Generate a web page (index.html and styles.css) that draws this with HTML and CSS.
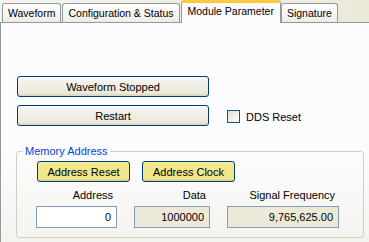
FILE: index.html
```html
<!DOCTYPE html>
<html lang="en">
<head>
  <meta charset="UTF-8">
  <title>Module Parameter</title>
  <link rel="stylesheet" href="styles.css">
</head>
<body>
  <div class="tabs">
    <div class="tab">Waveform</div>
    <div class="tab">Configuration &amp; Status</div>
    <div class="tab active">Module Parameter</div>
    <div class="tab">Signature</div>
  </div>

  <div class="page">
    <div class="actions">
      <button class="btn wide">Waveform Stopped</button>
      <div class="row">
        <button class="btn wide">Restart</button>
        <label class="check"><span class="box"></span>DDS Reset</label>
      </div>
    </div>

    <fieldset class="group">
      <legend>Memory Address</legend>
      <div class="group-buttons">
        <button class="btn yellow">Address Reset</button>
        <button class="btn yellow">Address Clock</button>
      </div>
      <div class="fields">
        <span class="field-label">Address</span>
        <span class="field-label">Data</span>
        <span class="field-label">Signal Frequency</span>
        <input class="field" type="text" value="0">
        <input class="field readonly" type="text" value="1000000" readonly>
        <input class="field readonly" type="text" value="9,765,625.00" readonly>
      </div>
    </fieldset>
  </div>
</body>
</html>
```

FILE: styles.css
```css
body {
  margin: 0;
  font-family: 'Liberation Sans', Arial, sans-serif;
  font-size: 11px;
  color: #000;
  background: #ece9d8;
  overflow: hidden;
}

/* Tab strip */
.tabs {
  display: flex;
  align-items: flex-end;
  height: 22px;
  padding-left: 2px;
  background: linear-gradient(90deg, #f4f3ee, #ece9d8);
}

.tab {
  height: 18px;
  line-height: 19px;
  padding: 0 5px;
  margin-right: 1px;
  border: 1px solid #919b9c;
  border-bottom: none;
  border-radius: 3px 3px 0 0;
  font-size: 10.5px;
  background: linear-gradient(#fefefe, #f4f3ee 70%, #ecebe6);
  white-space: nowrap;
}

.tab.active {
  position: relative;
  height: 20px;
  line-height: 17px;
  padding: 0 6px;
  margin-right: 0;
  margin-bottom: -1px;
  border-color: #919b9c;
  border-top: 3px solid #ffc83c;
  background: #fcfcfe;
  z-index: 1;
}

/* Tab page */
.page {
  height: 219px;
  border-top: 1px solid #919b9c;
  border-left: 1px solid #919b9c;
  padding: 0 5px 0 15px;
  background: linear-gradient(#fcfcfe 60%, #f4f3ee);
}

.actions {
  padding-top: 53px;
  margin-left: 1px;
}

.row {
  display: flex;
  align-items: center;
  margin-top: 8px;
}

.btn {
  height: 21px;
  padding: 0;
  border: 1px solid #003c74;
  border-radius: 3px;
  font-family: inherit;
  font-size: 11px;
  color: #000;
  background: linear-gradient(#ffffff, #f4f3ee 15%, #ece9d8 85%, #d6d0c5);
}

.btn.wide {
  display: block;
  width: 192px;
}

.btn.yellow {
  width: 93px;
  background: linear-gradient(#f6eea0, #f0e68c 20%, #f0e68c 85%, #d8cf78);
}

.check {
  display: flex;
  align-items: center;
  margin-left: 18px;
  padding-top: 2px;
}

.check .box {
  width: 11px;
  height: 11px;
  margin-right: 6px;
  border: 1px solid #1c5180;
  background: linear-gradient(135deg, #dcdcd7, #ffffff);
}

/* Group box */
.group {
  margin: 19px 0 0;
  padding: 0 0 9px;
  border: 1px solid #d0d0bf;
  border-radius: 3px;
  min-width: 0;
}

.group legend {
  margin-left: 6px;
  padding: 0 2px;
  line-height: 13px;
  color: #0046d5;
}

.group-buttons {
  display: flex;
  gap: 12px;
  margin: 3px 0 0 20px;
}

.fields {
  display: grid;
  grid-template-columns: 81px 76px 112px;
  column-gap: 17px;
  row-gap: 4px;
  margin: 7px 0 0 19px;
}

.field-label {
  text-align: right;
  padding-right: 4px;
  line-height: 13px;
}

.field {
  box-sizing: border-box;
  height: 22px;
  width: 100%;
  padding: 0 5px 0 0;
  border: 1px solid #7f9db9;
  font-family: inherit;
  font-size: 11px;
  text-align: right;
  color: #000;
  background: #fff;
  outline: none;
}

.field.readonly {
  background: #ece9d8;
}
```
